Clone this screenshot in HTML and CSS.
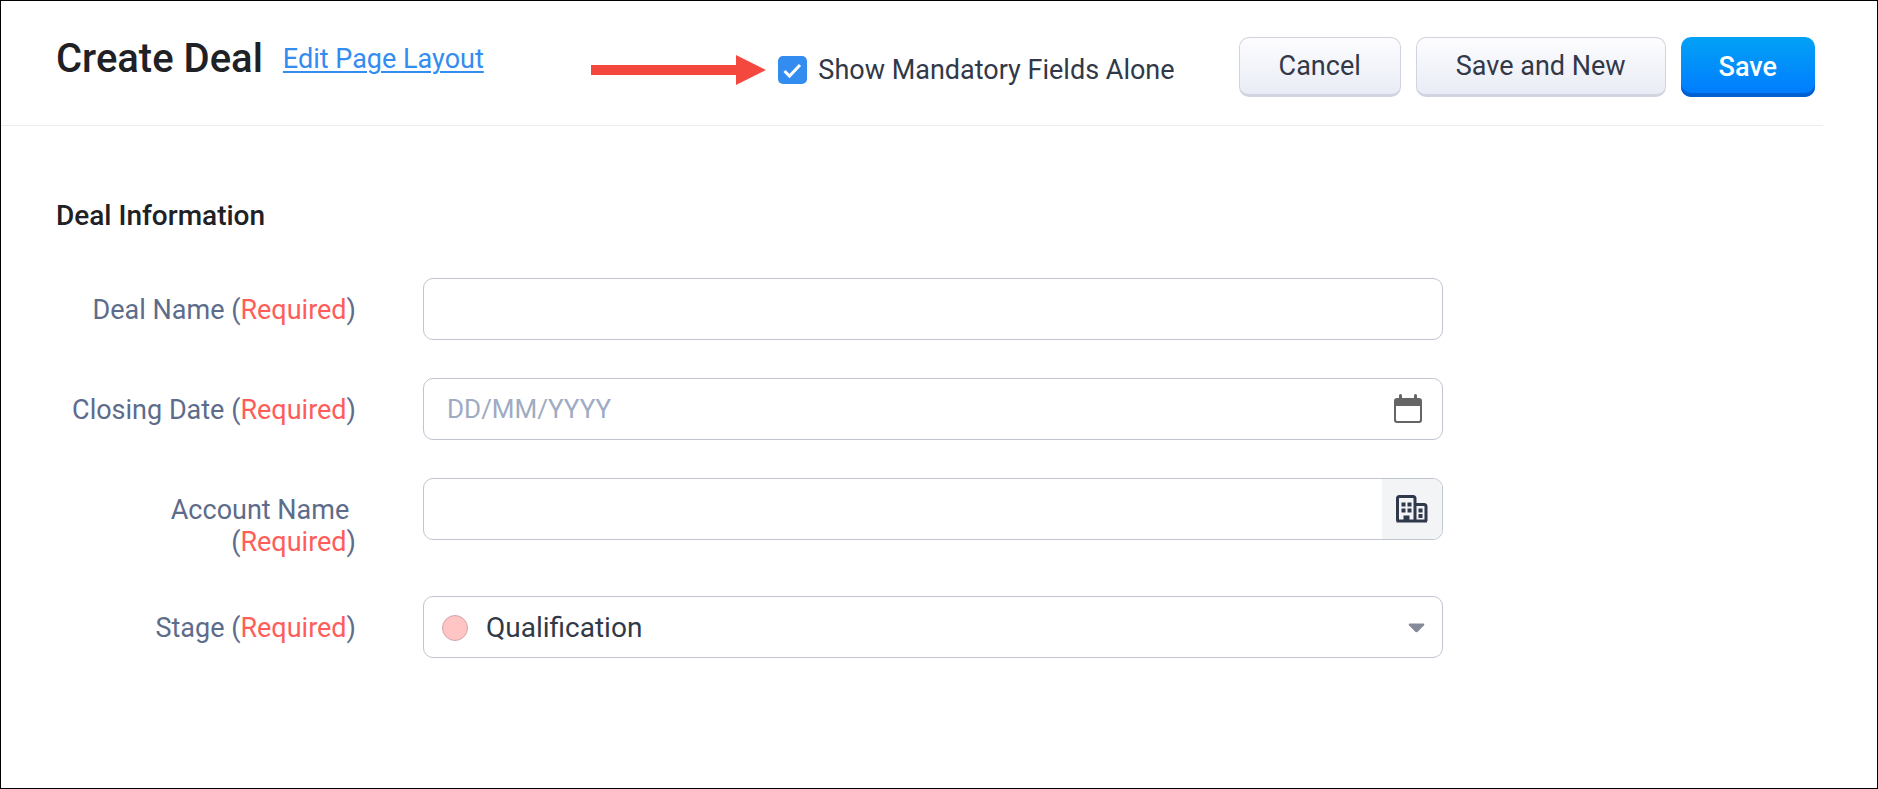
FILE: index.html
```
<!DOCTYPE html>
<html lang="en">

<head>
    <meta charset="UTF-8" />
    <meta name="viewport" content="width=device-width, initial-scale=1.0" />
    <title>Create Deal</title>
    <link rel="stylesheet" href="styles.css">
</head>

<body>

    <header class="page-header">
        <div class="heading">
            <h1>Create Deal</h1>
            <a class="layout-link" href="#">Edit Page Layout</a>
        </div>

        <div class="mandatory">
            <svg class="arrow" width="175" height="30" viewBox="0 0 175 30" aria-hidden="true">
                <path d="M0 10H145V0L175 15L145 30V20H0Z" fill="#f4483f" />
            </svg>
            <input id="mandatory-only" type="checkbox" checked />
            <label for="mandatory-only">Show Mandatory Fields Alone</label>
        </div>

        <div class="actions">
            <button type="button" class="btn">Cancel</button>
            <button type="submit" class="btn" form="deal-form">Save and New</button>
            <button type="submit" class="btn save-btn" form="deal-form">Save</button>
        </div>
    </header>

    <form id="deal-form" class="deal-form">
        <h2>Deal Information</h2>

        <div class="row">
            <label for="deal-name">Deal Name (<span class="required">Required</span>)</label>
            <div class="field">
                <input id="deal-name" type="text" />
            </div>
        </div>

        <div class="row">
            <label for="closing-date">Closing Date (<span class="required">Required</span>)</label>
            <div class="field">
                <input id="closing-date" class="date-input" type="text" placeholder="DD/MM/YYYY" />
                <button type="button" class="date-btn" aria-label="Choose date">
                    <svg width="28" height="30" viewBox="0 0 28 30">
                        <path d="M5 1.5Q5 0 6.500 0Q8 0 8 1.500V4H20V1.500Q20 0 21.500 0Q23 0 23 1.500V4H25Q28 4 28 7V26Q28 29 25 29H3Q0 29 0 26V7Q0 4 3 4H5ZM2 12V25.500Q2 27 3.500 27H24.500Q26 27 26 25.500V12Z" fill="#656565" fill-rule="evenodd" />
                    </svg>
                </button>
            </div>
        </div>

        <div class="row">
            <label for="account-name">Account Name&nbsp;<br>(<span class="required">Required</span>)</label>
            <div class="field">
                <input id="account-name" type="text" />
                <button type="button" class="lookup-btn" aria-label="Look up account">
                    <svg width="32" height="28" viewBox="0 0 32 28">
                        <path d="M1.500 26V3.500Q1.500 1.500 3.500 1.500H17Q19 1.500 19 3.500V26M19 9.500H28Q30 9.500 30 11.500V26M0.500 26H31" fill="none" stroke="#2f394b" stroke-width="3" />
                        <path d="M5.500 7.500h4v4h-4zM11.500 7.500h4v4h-4zM5.500 13.500h4v4h-4zM11.500 13.500h4v4h-4zM7.500 20.500h6V26h-6zM22.500 13.500h4v4h-4zM22.500 19h4v4h-4z" fill="#2f394b" />
                    </svg>
                </button>
            </div>
        </div>

        <div class="row">
            <label for="stage">Stage (<span class="required">Required</span>)</label>
            <div class="field">
                <span class="stage-dot"></span>
                <select id="stage">
                    <option>Qualification</option>
                </select>
                <svg class="caret" width="17" height="10" viewBox="0 0 17 10" aria-hidden="true">
                    <path d="M1.500 0.500H15.500Q17 1 16 2.300L10 8.500Q8.500 9.800 7 8.500L1 2.300Q0 1 1.500 0.500Z" fill="#858a98" />
                </svg>
            </div>
        </div>
    </form>

</body>

</html>
```
FILE: styles.css
```
* {
    box-sizing: border-box;
}

body {
    font-family: Roboto, "Open Sans", sans-serif;
    font-size: 27px;
    line-height: 32px;
    margin: 0;
    min-height: 100vh;
    border: 1px solid #000;
    background-color: #fff;
    color: #313949;
}

.page-header {
    display: flex;
    align-items: flex-start;
    margin-right: 54px;
    padding: 36px 8px 28px 55px;
    border-bottom: 1px solid #ededed;
}

.heading {
    display: flex;
    align-items: center;
    gap: 20px;
}

h1 {
    margin: 0;
    font-size: 40px;
    font-weight: 500;
    line-height: 44px;
    color: #202124;
}

.layout-link {
    color: #338cf0;
    text-decoration-thickness: 2px;
    text-underline-offset: 3px;
}

.mandatory {
    display: flex;
    align-items: center;
    margin-left: auto;
    padding-top: 17px;
}

.arrow {
    margin-right: 12px;
}

.mandatory input {
    appearance: none;
    width: 29px;
    height: 28px;
    margin: 0 11px 0 0;
    border-radius: 5px;
    background-color: #fff;
    border: 1px solid #bfc4cf;
}

.mandatory input:checked {
    border: none;
    background: #338cf0 url("data:image/svg+xml;charset=UTF-8,%3Csvg width='29' height='28' viewBox='0 0 29 28' xmlns='http://www.w3.org/2000/svg'%3E%3Cpath d='M6.500 15L11.500 20L22 9' fill='none' stroke='%23fff' stroke-width='3'/%3E%3C/svg%3E") no-repeat center;
}

.actions {
    display: flex;
    gap: 15px;
    margin-left: 64px;
}

.btn {
    height: 60px;
    padding: 0 39px;
    font-family: inherit;
    font-size: 27px;
    color: #313949;
    border: 1px solid #d0d4e0;
    border-bottom-width: 3px;
    border-radius: 10px;
    background: linear-gradient(#fdfdff, #e9ecf5);
    cursor: pointer;
}

.save-btn {
    padding: 0 38px;
    font-weight: 500;
    color: #fff;
    border: none;
    background: linear-gradient(#03a2f6, #007aff);
    box-shadow: inset 0 -4px 0 #0060d0;
}

.deal-form {
    display: grid;
    gap: 38px;
    padding: 74px 54px 74px 55px;
}

h2 {
    margin: 0 0 8px;
    font-size: 28px;
    font-weight: 500;
    line-height: 32px;
    color: #202124;
}

.row {
    display: grid;
    grid-template-columns: 300px minmax(0, 1020px);
    column-gap: 67px;
    align-items: start;
}

.row label {
    padding-top: 16px;
    text-align: right;
    color: #5d6c8a;
}

.required {
    color: #ff5d5a;
}

.field {
    position: relative;
    display: flex;
    height: 62px;
    border: 1px solid #bfc4cf;
    border-radius: 10px;
    background-color: #fff;
    overflow: hidden;
}

.field input,
.field select {
    flex: 1;
    min-width: 0;
    padding: 0 23px;
    font-family: inherit;
    font-size: 28px;
    color: #313949;
    border: none;
    background: transparent;
}

.field .date-input {
    font-size: 26px;
}

.field input::placeholder {
    color: #9eabc2;
}

.field select {
    appearance: none;
    padding-left: 62px;
}

.date-btn,
.lookup-btn {
    display: flex;
    align-items: center;
    justify-content: center;
    width: 60px;
    padding: 0;
    border: none;
    background: transparent;
    cursor: pointer;
}

.date-btn {
    width: 68px;
}

.lookup-btn {
    background-color: #f3f4f6;
}

.stage-dot {
    position: absolute;
    top: 18px;
    left: 18px;
    width: 26px;
    height: 26px;
    border: 1px solid #d3a5a8;
    border-radius: 50%;
    background-color: #ffc4c4;
}

.caret {
    position: absolute;
    top: 26px;
    right: 17px;
    pointer-events: none;
}
```
